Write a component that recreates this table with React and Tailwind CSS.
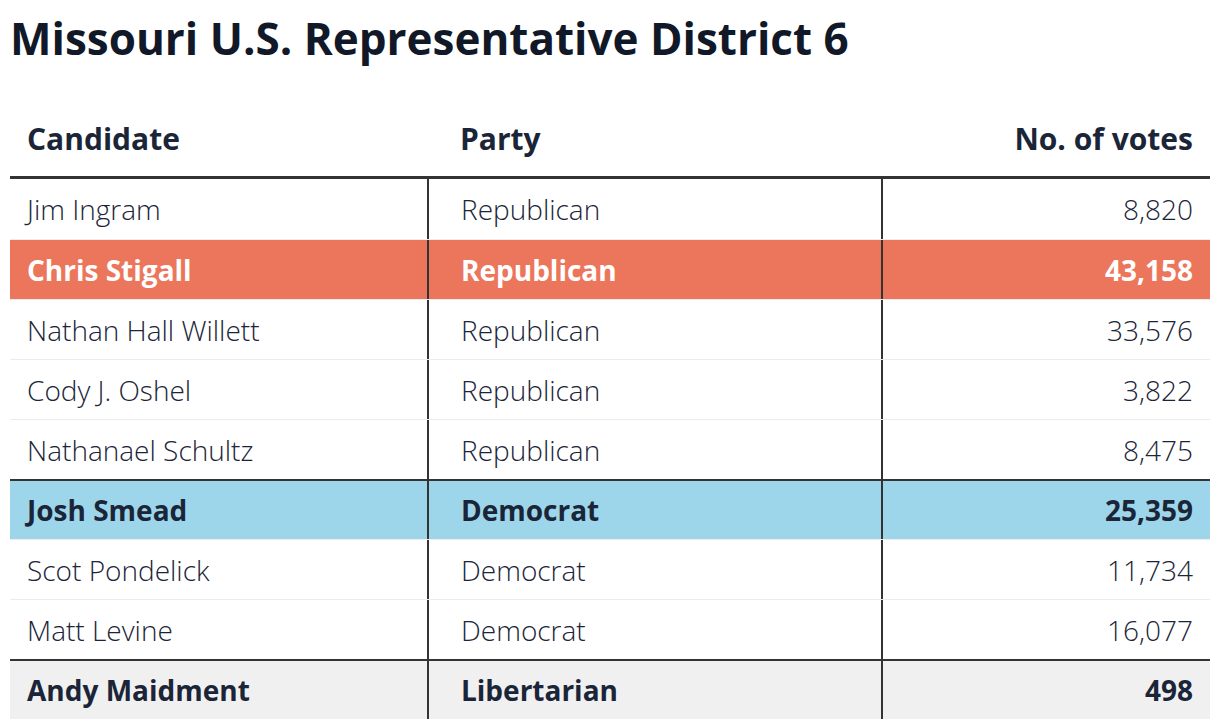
import React from 'react';

const rows = [
    { name: 'Jim Ingram', party: 'Republican', votes: '8,820' },
    { name: 'Chris Stigall', party: 'Republican', votes: '43,158', tone: 'rep' },
    { name: 'Nathan Hall Willett', party: 'Republican', votes: '33,576' },
    { name: 'Cody J. Oshel', party: 'Republican', votes: '3,822' },
    { name: 'Nathanael Schultz', party: 'Republican', votes: '8,475' },
    { name: 'Josh Smead', party: 'Democrat', votes: '25,359', tone: 'dem', groupStart: true },
    { name: 'Scot Pondelick', party: 'Democrat', votes: '11,734' },
    { name: 'Matt Levine', party: 'Democrat', votes: '16,077' },
    { name: 'Andy Maidment', party: 'Libertarian', votes: '498', tone: 'lib', groupStart: true },
];

const toneClasses = {
    rep: 'bg-[#ec765b] text-white font-bold',
    dem: 'bg-[#9dd6eb] text-[#1b2538] font-bold',
    lib: 'bg-[#f0f0f0] text-[#1b2538] font-bold',
};

const ResultRow = ({ row, first }) => {
    const tone = row.tone ? toneClasses[row.tone] : 'text-[#1b2538] font-light';
    // Group boundaries get a dark rule, other rows a faint one
    const rule = first
        ? ''
        : row.groupStart
            ? 'border-t-2 border-[#333333]'
            : 'border-t border-[#ececec]';
    return (
        <div className={`grid grid-cols-[417px_454px_1fr] h-[60px] items-stretch ${rule} ${tone}`}>
            <div className="flex items-center pl-[17px]">{row.name}</div>
            <div className="flex items-center pl-[32px] border-l-2 border-[#333333]">{row.party}</div>
            <div className="flex items-center justify-end pr-[17px] border-l-2 border-[#333333]">{row.votes}</div>
        </div>
    );
};

export default function App() {
    return (
        <div className="bg-white min-h-screen px-[10px] pt-[8px] font-['Open_Sans',sans-serif]">
            <h1 className="text-[44px] leading-[60px] font-bold text-[#111827]">
                Missouri U.S. Representative District 6
            </h1>

            <div className="mt-[43px] w-[1200px] text-[28px]">
                <div className="grid grid-cols-[417px_454px_1fr] h-[68px] items-center text-[30px] font-bold text-[#1b2538] border-b-[3px] border-[#333333]">
                    <div className="pl-[17px] -mt-[10px]">Candidate</div>
                    <div className="pl-[33px] -mt-[10px]">Party</div>
                    <div className="pr-[17px] -mt-[10px] text-right">No. of votes</div>
                </div>
                {rows.map((row, i) => (
                    <ResultRow key={row.name} row={row} first={i === 0} />
                ))}
            </div>
        </div>
    );
}
